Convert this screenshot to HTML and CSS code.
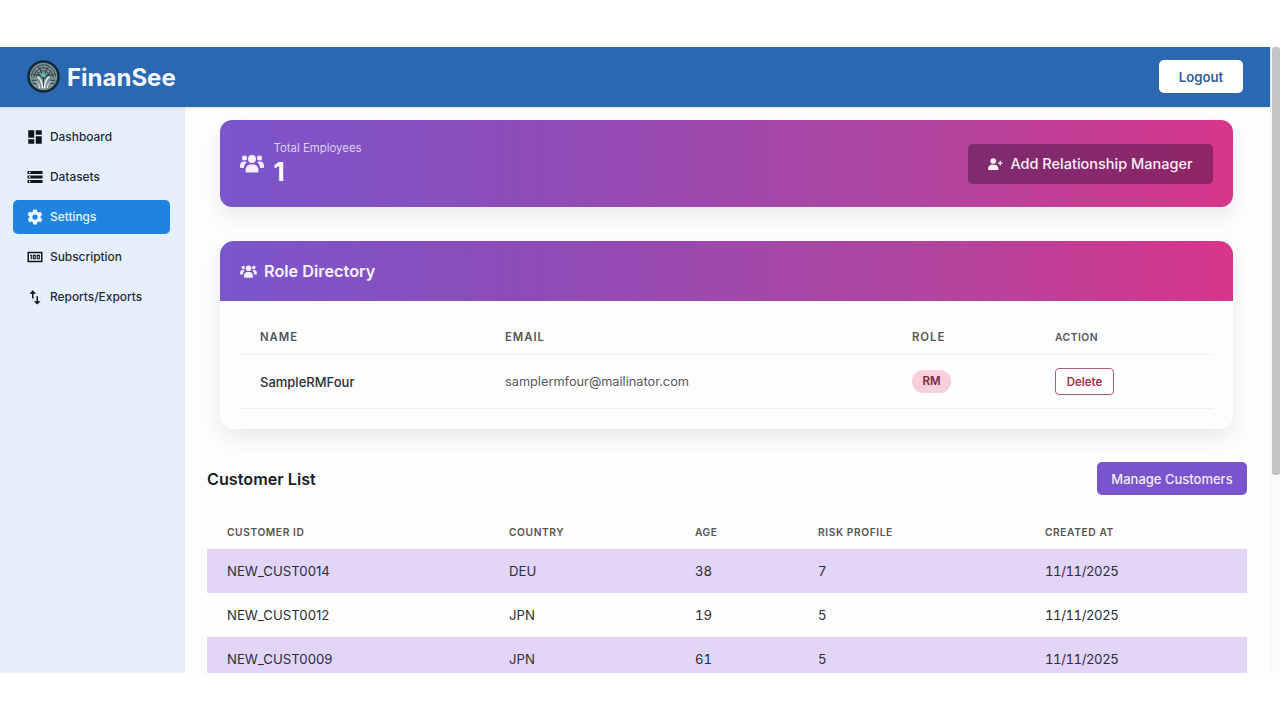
FILE: index.html
```html
<!DOCTYPE html>
<html lang="en">
<head>
<meta charset="utf-8">
<title>FinanSee</title>
<link rel="stylesheet" href="styles.css">
</head>
<body>
<div class="app">
  <div class="page">
    <header class="topbar">
      <div class="brand">
        <svg class="logo" viewBox="0 0 34 34" aria-hidden="true">
          <circle cx="17" cy="17" r="16.800" fill="#0e2a39"/>
          <circle cx="17" cy="17" r="14.200" fill="#7f9092"/>
          <g fill="none" stroke="#1d3542" stroke-width=".9">
            <path d="M17 27V16M17 20L9 11M17 20L25 11M17 17L12 7M17 17L22 7M14 16L6 15M20 16L28 15"/>
            <path d="M4.500 17c1-8 7-12 12.500-12s11.500 4 12.500 12M7 18c1-6 5-10 10-10s9 4 10 10M10 18c1-4 4-7 7-7s6 3 7 7"/>
            <path d="M5 21h5M24 21h5M6 24h5M23 24h5"/>
          </g>
          <g fill="none" stroke="#eef3f3" stroke-width="1.500">
            <path d="M10.500 17c3 2 5.500 5 5.500 12M23.500 17c-3 2-5.500 5-5.500 12"/>
            <path d="M13 29c0-3-1-5-4-7M21 29c0-3 1-5 4-7" stroke-width="1"/>
          </g>
          <circle cx="17" cy="15.500" r="2" fill="#3fd0b0"/>
        </svg>
        <span class="brand-name">FinanSee</span>
      </div>
      <button class="logout">Logout</button>
    </header>
    <div class="body">
      <nav class="sidebar">
        <a class="nav-item">
          <svg class="nav-icon" viewBox="0 0 24 24"><path d="M3 13h8V3H3zm0 8h8v-6H3zm10 0h8V11h-8zm0-18v6h8V3z"/></svg>
          <span>Dashboard</span>
        </a>
        <a class="nav-item">
          <svg class="nav-icon" viewBox="0 0 24 24"><path d="M2 20h20v-4H2zm2-3h2v2H4zM2 4v4h20V4zm4 3H4V5h2zm-4 7h20v-4H2zm2-3h2v2H4z"/></svg>
          <span>Datasets</span>
        </a>
        <a class="nav-item active">
          <svg class="nav-icon" viewBox="0 0 24 24"><path d="M19.4 13c.1-.3.1-.7.1-1s0-.7-.1-1l2.100-1.600c.2-.2.2-.4.1-.6l-2-3.500c-.1-.2-.4-.3-.6-.2l-2.500 1c-.5-.4-1.100-.7-1.700-1l-.4-2.700c0-.2-.2-.4-.5-.4h-4c-.3 0-.5.2-.5.4l-.4 2.700c-.6.2-1.200.6-1.700 1l-2.500-1c-.2-.1-.5 0-.6.2l-2 3.500c-.1.2-.1.5.1.6L4.600 11c-.1.3-.1.7-.1 1s0 .7.1 1l-2.100 1.600c-.2.2-.2.4-.1.6l2 3.500c.1.2.4.3.6.2l2.500-1c.5.4 1.100.7 1.700 1l.4 2.700c0 .2.2.4.5.4h4c.3 0 .5-.2.5-.4l.4-2.700c.6-.2 1.200-.6 1.700-1l2.500 1c.2.1.5 0 .6-.2l2-3.500c.1-.2.1-.5-.1-.6zM12 15.500a3.500 3.500 0 1 1 0-7 3.500 3.500 0 0 1 0 7z"/></svg>
          <span>Settings</span>
        </a>
        <a class="nav-item">
          <svg class="nav-icon" viewBox="0 0 24 24"><path fill-rule="evenodd" d="M2 5h20v14H2zm2 2v10h16V7zM5.500 9h2.300v6H6.300v-4.500h-.8zm3.500 0h4v6H9zm1.500 1.500v3h1v-3zM14.200 9h4.300v6h-4.300zm1.500 1.500v3h1.300v-3z"/></svg>
          <span>Subscription</span>
        </a>
        <a class="nav-item">
          <svg class="nav-icon" viewBox="0 0 24 24"><path d="M9 3 4.500 7.500H8V14h2V7.500h3.500zM16 17.500V11h-2v6.500h-3.500L15 22l4.500-4.500z"/></svg>
          <span>Reports/Exports</span>
        </a>
      </nav>
      <main class="main">
        <section class="stat-card gradient">
          <div class="stat-left">
            <svg class="users-lg" viewBox="0 0 24 20"><use href="#users"/></svg>
            <div class="stat-text">
              <div class="stat-label">Total Employees</div>
              <div class="stat-value">1</div>
            </div>
          </div>
          <button class="add-btn">
            <svg class="add-icon" viewBox="0 0 20 16"><circle cx="7" cy="4" r="3.800"/><path d="M0 15c0-4 2.500-6 5-6h4c2.500 0 5 2 5 6 0 .6-.4 1-1 1H1c-.6 0-1-.4-1-1z"/><path d="M15.500 3.500h1.600v2.400h2.400v1.600h-2.400v2.400h-1.600V7.500h-2.400V5.900h2.400z"/></svg>
            Add Relationship Manager
          </button>
        </section>

        <section class="role-card">
          <div class="role-head gradient">
            <svg class="users-sm" viewBox="0 0 24 20"><use href="#users"/></svg>
            <h2>Role Directory</h2>
          </div>
          <div class="role-body">
            <table class="role-table">
              <thead>
                <tr><th class="c-name">Name</th><th class="c-email">Email</th><th class="c-role">Role</th><th class="c-action">Action</th></tr>
              </thead>
              <tbody>
                <tr>
                  <td class="rm-name">SampleRMFour</td>
                  <td class="rm-email">samplermfour@mailinator.com</td>
                  <td><span class="badge">RM</span></td>
                  <td><button class="delete">Delete</button></td>
                </tr>
              </tbody>
            </table>
          </div>
        </section>

        <section class="customers">
          <div class="cust-head">
            <h2>Customer List</h2>
            <button class="manage">Manage Customers</button>
          </div>
          <table class="cust-table">
            <thead>
              <tr><th class="k-id">Customer ID</th><th class="k-country">Country</th><th class="k-age">Age</th><th class="k-risk">Risk Profile</th><th>Created At</th></tr>
            </thead>
            <tbody>
              <tr class="alt"><td>NEW_CUST0014</td><td>DEU</td><td class="num">38</td><td class="num">7</td><td class="date">11/11/2025</td></tr>
              <tr><td>NEW_CUST0012</td><td>JPN</td><td class="num">19</td><td class="num">5</td><td class="date">11/11/2025</td></tr>
              <tr class="alt"><td>NEW_CUST0009</td><td>JPN</td><td class="num">61</td><td class="num">5</td><td class="date">11/11/2025</td></tr>
            </tbody>
          </table>
        </section>
      </main>
    </div>
  </div>
  <div class="scrollbar"><div class="thumb"></div></div>
</div>
<svg class="defs" width="0" height="0" aria-hidden="true">
  <symbol id="users" viewBox="0 0 24 20">
    <circle cx="12" cy="6" r="4"/>
    <circle cx="4.500" cy="5" r="2.500"/>
    <circle cx="19.500" cy="5" r="2.500"/>
    <path d="M5.500 18c0-4.500 2.500-6.500 5-6.500h3c2.500 0 5 2 5 6.500 0 .8-.5 1.500-1.300 1.500H6.800c-.8 0-1.300-.7-1.300-1.500z"/>
    <path d="M0 13c0-3 1.500-4.500 3.500-4.500H5c.7 0 1.300.2 1.800.5C5 10.500 4 12.500 3.900 15H1c-.6 0-1-.5-1-1z"/>
    <path d="M24 13c0-3-1.500-4.500-3.500-4.500H19c-.7 0-1.300.2-1.800.5 1.800 1.500 2.800 3.500 2.900 6H23c.6 0 1-.5 1-1z"/>
  </symbol>
</svg>
</body>
</html>
```
FILE: styles.css
```css
* { box-sizing: border-box; }
html, body { margin: 0; height: 100%; overflow: hidden; background: #fff; }
body { font-family: Inter, "Liberation Sans", sans-serif; color: #1f2430; padding-top: 47px; }
button { font-family: inherit; cursor: pointer; }
.defs { display: block; height: 0; }

.app { display: flex; height: 626px; background: #fdfdfd; overflow: hidden; }
.page { width: 1270px; display: flex; flex-direction: column; }
.scrollbar { width: 10px; padding: 0 1px 0 1px; background: #fbfbfb; border-left: 1px solid #efefef; }
.thumb { width: 8px; height: 428px; background: #c4c4c4; border-radius: 3px; }

.topbar { height: 60px; flex: none; background: #2a68b1; display: flex; align-items: center; justify-content: space-between; padding: 0 27px 1px 27px; box-shadow: 0 1px 3px rgba(0,0,0,.12); position: relative; z-index: 1; }
.brand { display: flex; align-items: center; gap: 7px; }
.logo { width: 33px; height: 33px; }
.brand-name { font-size: 24px; font-weight: 700; color: #f4f8fc; padding-top: 1px; }
.logout { width: 84px; height: 33px; background: #fff; color: #2f5e96; border: 0; border-radius: 5px; font-size: 13.200px; font-weight: 600; padding: 0; }

.body { flex: 1; display: flex; min-height: 0; }
.sidebar { width: 185px; flex: none; background: #e6f0fa; padding: 13px 15px 0 13px; display: flex; flex-direction: column; gap: 6px; }
.nav-item { height: 34px; display: flex; align-items: center; gap: 6px; padding: 0 0 1px 13px; border-radius: 5px; font-size: 11.900px; font-weight: 500; color: #1f2a3a; }
.nav-item.active { background: #1e84e0; color: #eaf4fd; }
.nav-icon { width: 18px; height: 18px; flex: none; fill: #10151c; }
.active .nav-icon { fill: #f4f9fe; }

.main { flex: 1; min-width: 0; padding: 13px 23px 0 22px; overflow: hidden; }
.gradient { background: linear-gradient(90deg, #7a56cc 0%, #8d4cb8 30%, #b2459f 70%, #d7368b 100%); }

.stat-card { margin: 0 14px 0 13px; height: 87px; border-radius: 12px; display: flex; align-items: center; justify-content: space-between; padding: 0 20px; color: #fff; box-shadow: 0 10px 20px rgba(60,50,90,.09); }
.stat-left { display: flex; align-items: center; gap: 9.500px; }
.users-lg { width: 24px; height: 20px; fill: #f3eefa; margin-top: -1px; }
.stat-text { display: flex; flex-direction: column; }
.stat-label { font-size: 11.400px; line-height: 16px; color: #dcd0ef; padding-top: 1px; }
.stat-value { font-size: 26px; line-height: 32px; font-weight: 700; }
.add-btn { width: 245px; height: 40px; border: 0; border-radius: 5px; background: rgba(60,15,60,.45); color: #f8eef6; font-size: 14.500px; font-weight: 500; display: flex; align-items: center; justify-content: center; gap: 7px; padding: 0; }
.add-icon { width: 15px; height: 12px; fill: #f8eef6; }

.role-card { margin: 34px 14px 0 13px; height: 188px; border-radius: 14px; background: #fdfdfd; box-shadow: 0 8px 20px rgba(60,60,80,.1); }
.role-head { height: 60px; border-radius: 14px 14px 0 0; display: flex; align-items: center; gap: 7px; padding-left: 20px; color: #f7f1fa; }
.role-head h2 { margin: 0; font-size: 16.300px; font-weight: 600; }
.users-sm { width: 17px; height: 14px; fill: #f3eefa; }
.role-body { padding: 0 20px; }
.role-table { width: 100%; border-collapse: collapse; table-layout: fixed; }
.role-table th { height: 53px; padding: 20px 0 0 20px; text-align: left; font-size: 11.300px; font-weight: 600; letter-spacing: 1px; text-transform: uppercase; color: #555; border-bottom: 1px solid #f0f0f2; }
.role-table .c-action { font-size: 10.300px; letter-spacing: .5px; }
.c-name { width: 245px; }
.c-email { width: 407px; }
.c-role { width: 143px; }
.role-table td { height: 54px; padding: 1px 0 0 20px; font-size: 13px; border-bottom: 1px solid #f0f0f2; }
.rm-name { font-weight: 500; color: #2b2f38; }
.role-table .rm-email { color: #555a64; font-size: 12.750px; }
.badge { display: inline-block; width: 39px; height: 23px; line-height: 23px; text-align: center; border-radius: 12px; background: #f8d0dd; color: #7c2640; font-size: 11.500px; font-weight: 600; }
.delete { display: block; width: 59px; height: 27px; margin-top: -1px; padding: 1px 0 0; background: #fff; border: 1px solid #a8606e; border-radius: 4px; color: #a5324a; font-size: 11.500px; font-weight: 600; }

.customers { margin-top: 33px; }
.cust-head { display: flex; align-items: center; justify-content: space-between; height: 33px; }
.cust-head h2 { margin: 0; font-size: 16.200px; font-weight: 600; color: #1c1f26; }
.manage { width: 150px; height: 33px; border: 0; border-radius: 5px; background: #7855cc; color: #f2edfb; font-size: 13px; font-weight: 500; padding: 0; }
.cust-table { width: 100%; margin-top: 20px; border-collapse: collapse; table-layout: fixed; }
.cust-table th { height: 34px; padding: 0 0 0 20px; text-align: left; font-size: 10.200px; font-weight: 600; letter-spacing: .6px; text-transform: uppercase; color: #555; }
.k-id { width: 282px; }
.k-country { width: 186px; }
.k-age { width: 123px; }
.k-risk { width: 227px; }
.cust-table td { height: 44px; padding: 0 0 0 20px; font-size: 13.200px; color: #2b2d36; }
.cust-table .num { font-variant-numeric: tabular-nums; }
.cust-table .date { font-variant-numeric: tabular-nums; letter-spacing: -.45px; }
.alt { background: #e2d5f8; }
```
